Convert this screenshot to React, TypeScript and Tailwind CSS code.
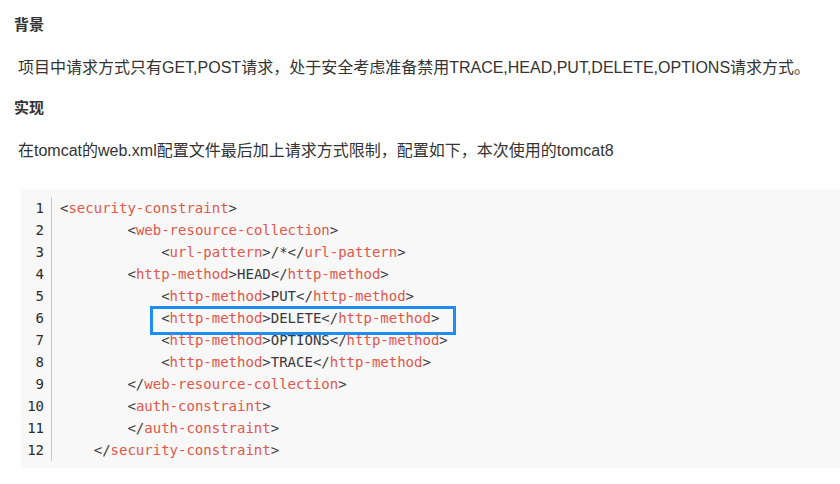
import React from 'react';

type Tok = { t: string; c?: 'tag' };

const lines: { indent: number; toks: Tok[] }[] = [
  { indent: 0, toks: [{ t: '<' }, { t: 'security-constraint', c: 'tag' }, { t: '>' }] },
  { indent: 8, toks: [{ t: '<' }, { t: 'web-resource-collection', c: 'tag' }, { t: '>' }] },
  { indent: 12, toks: [{ t: '<' }, { t: 'url-pattern', c: 'tag' }, { t: '>/*</' }, { t: 'url-pattern', c: 'tag' }, { t: '>' }] },
  { indent: 8, toks: [{ t: '<' }, { t: 'http-method', c: 'tag' }, { t: '>HEAD</' }, { t: 'http-method', c: 'tag' }, { t: '>' }] },
  { indent: 12, toks: [{ t: '<' }, { t: 'http-method', c: 'tag' }, { t: '>PUT</' }, { t: 'http-method', c: 'tag' }, { t: '>' }] },
  { indent: 12, toks: [{ t: '<' }, { t: 'http-method', c: 'tag' }, { t: '>DELETE</' }, { t: 'http-method', c: 'tag' }, { t: '>' }] },
  { indent: 12, toks: [{ t: '<' }, { t: 'http-method', c: 'tag' }, { t: '>OPTIONS</' }, { t: 'http-method', c: 'tag' }, { t: '>' }] },
  { indent: 12, toks: [{ t: '<' }, { t: 'http-method', c: 'tag' }, { t: '>TRACE</' }, { t: 'http-method', c: 'tag' }, { t: '>' }] },
  { indent: 8, toks: [{ t: '</' }, { t: 'web-resource-collection', c: 'tag' }, { t: '>' }] },
  { indent: 8, toks: [{ t: '<' }, { t: 'auth-constraint', c: 'tag' }, { t: '>' }] },
  { indent: 8, toks: [{ t: '</' }, { t: 'auth-constraint', c: 'tag' }, { t: '>' }] },
  { indent: 4, toks: [{ t: '</' }, { t: 'security-constraint', c: 'tag' }, { t: '>' }] },
];

const App = () => {
  return (
    <div className="w-[840px] h-[484px] bg-white pl-[14px] text-[#333] font-['Liberation_Sans','Noto_Sans_CJK_SC',sans-serif] overflow-hidden">
      <h3 className="mt-[14px] h-[22px] leading-[22px] text-[15px] font-bold">背景</h3>
      <p className="mt-[20px] h-[24px] leading-[24px] text-[16px] pl-[4px]">
        项目中请求方式只有GET,POST请求，处于安全考虑准备禁用TRACE,HEAD,PUT,DELETE,OPTIONS请求方式。
      </p>
      <h3 className="mt-[17px] h-[22px] leading-[22px] text-[15px] font-bold">实现</h3>
      <p className="mt-[20px] h-[24px] leading-[24px] text-[16px] pl-[4px]">
        在tomcat的web.xml配置文件最后加上请求方式限制，配置如下，本次使用的tomcat8
      </p>

      <div className="mt-[26px] ml-[7px] bg-[#f8f8f8] flex pt-[8px] pb-[7px] font-['DejaVu_Sans_Mono',monospace] text-[14px] leading-[22px]">
        <div className="w-[31px] pr-[7px] border-r border-[#c8c8c8] text-right text-[#2b2b2b]">
          {lines.map((_, i) => (
            <div key={i}>{i + 1}</div>
          ))}
        </div>
        <div className="pl-[8px] text-[#383a42] whitespace-pre">
          {lines.map((line, i) => (
            <div key={i} className="relative">
              {' '.repeat(line.indent)}
              <span className="relative">
                {i === 5 && (
                  <span className="absolute left-[-11px] top-[-4px] w-[306px] h-[29px] border-[3px] border-[#1e8cf0]" />
                )}
                {line.toks.map((tok, j) => (
                  <span key={j} className={tok.c === 'tag' ? 'text-[#e45649]' : ''}>
                    {tok.t}
                  </span>
                ))}
              </span>
            </div>
          ))}
        </div>
      </div>
    </div>
  );
};

export default App;
